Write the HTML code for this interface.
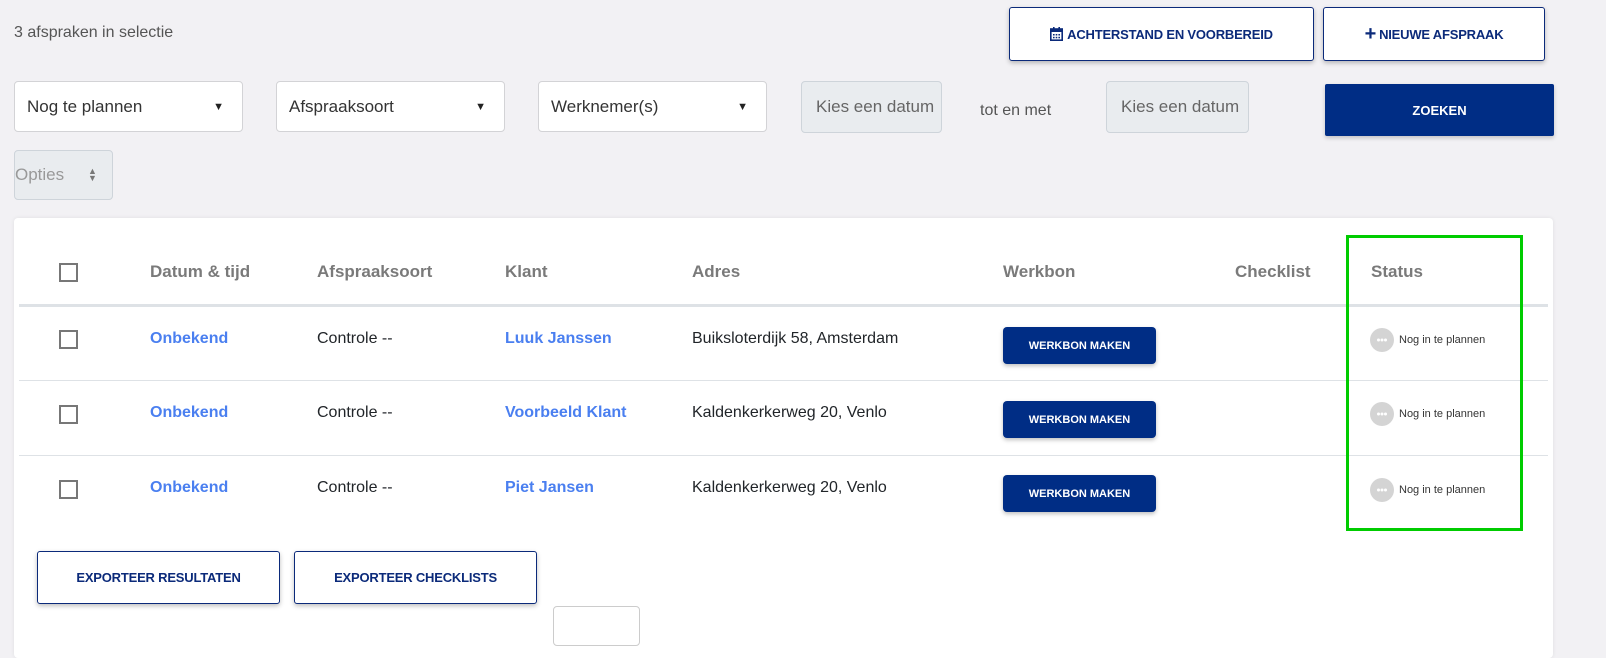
<!DOCTYPE html>
<html><head><meta charset="utf-8"><style>
*{box-sizing:border-box;margin:0;padding:0}
body{width:1606px;height:631px;overflow:hidden;background:#f2f1f4;font-family:"Liberation Sans",Arial,sans-serif;position:relative;color:#212529}
.a{position:absolute}
.obtn{position:absolute;background:#fff;border:1.5px solid #0b2a7a;border-radius:3px;box-shadow:0 2px 5px rgba(0,0,0,.25);color:#0b2a7a;font-weight:bold;font-size:13px;display:flex;align-items:center;justify-content:center;letter-spacing:-0.2px}
.sel{position:absolute;background:#fff;border:1px solid #d3d3d6;border-radius:4px;font-size:17px;color:#333;padding-left:12px;display:flex;align-items:center}
.sel .ar{position:absolute;right:18px;font-size:11px;color:#222}
.dt{position:absolute;background:#e9ecef;border:1px solid #ced4da;border-radius:4px;font-size:17px;color:#666;padding-left:14px;display:flex;align-items:center;overflow:hidden;white-space:nowrap}
.card{position:absolute;left:14px;top:218px;width:1539px;height:440px;background:#fff;border-radius:4px;box-shadow:0 0 4px rgba(0,0,0,.08)}
.th{position:absolute;top:262px;font-size:17px;font-weight:bold;color:#7a7a7a}
.cb{position:absolute;left:59px;width:19px;height:19px;border:2px solid #777;background:#fff}
.td{position:absolute;font-size:16px}
.lnk{color:#4a7ff0;font-weight:bold}
.wb{position:absolute;left:1003px;width:153px;height:37px;background:#002d85;border-radius:4px;color:#fff;font-size:11px;font-weight:bold;display:flex;align-items:center;justify-content:center;box-shadow:0 2px 4px rgba(0,0,0,.25)}
.st{position:absolute;left:1370px;font-size:11px;color:#333;display:flex;align-items:center}
.st svg{margin-right:5px}
.hl{position:absolute;left:19px;width:1529px;background:#dee2e6}
</style></head><body>
<div class="a" style="left:14px;top:24px;font-size:16px;color:#555">3 afspraken in selectie</div>
<div class="obtn" style="left:1009px;top:7px;width:305px;height:54px"><svg width="13" height="14" viewBox="0 0 13 14" style="margin-right:4px"><rect x="0.8" y="2" width="11.4" height="11.2" fill="none" stroke="#0b2a7a" stroke-width="1.6"/><rect x="0.8" y="2" width="11.4" height="3" fill="#0b2a7a"/><rect x="3" y="0" width="1.6" height="3" fill="#0b2a7a"/><rect x="8.4" y="0" width="1.6" height="3" fill="#0b2a7a"/><g fill="#0b2a7a"><rect x="3" y="7" width="1.6" height="1.5"/><rect x="5.7" y="7" width="1.6" height="1.5"/><rect x="8.4" y="7" width="1.6" height="1.5"/><rect x="3" y="9.8" width="1.6" height="1.5"/><rect x="5.7" y="9.8" width="1.6" height="1.5"/><rect x="8.4" y="9.8" width="1.6" height="1.5"/></g></svg>ACHTERSTAND EN VOORBEREID</div>
<div class="obtn" style="left:1323px;top:7px;width:222px;height:54px"><span style="font-size:20px;margin-right:3px;line-height:1">+</span>NIEUWE AFSPRAAK</div>
<div class="sel" style="left:14px;top:81px;width:229px;height:51px">Nog te plannen<span class="ar">▼</span></div>
<div class="sel" style="left:276px;top:81px;width:229px;height:51px">Afspraaksoort<span class="ar">▼</span></div>
<div class="sel" style="left:538px;top:81px;width:229px;height:51px">Werknemer(s)<span class="ar">▼</span></div>
<div class="dt" style="left:801px;top:81px;width:141px;height:52px">Kies een datum</div>
<div class="a" style="left:980px;top:102px;font-size:16px;color:#555">tot en met</div>
<div class="dt" style="left:1106px;top:81px;width:143px;height:52px">Kies een datum</div>
<div class="a" style="left:1325px;top:84px;width:229px;height:52px;background:#002d85;border-radius:2px;color:#fff;font-weight:bold;font-size:13px;display:flex;align-items:center;justify-content:center;box-shadow:0 2px 4px rgba(0,0,0,.2)">ZOEKEN</div>
<div class="a" style="left:14px;top:150px;width:99px;height:50px;background:#e9ecef;border:1px solid #ced4da;border-radius:4px;color:#999;font-size:17px;display:flex;align-items:center"><span>Opties</span><span style="position:absolute;left:73px;font-size:9px;color:#777;line-height:0.8">▲<br>▼</span></div>
<div class="card"></div>
<div class="cb" style="top:263px"></div>
<div class="th" style="left:150px">Datum &amp; tijd</div>
<div class="th" style="left:317px">Afspraaksoort</div>
<div class="th" style="left:505px">Klant</div>
<div class="th" style="left:692px">Adres</div>
<div class="th" style="left:1003px">Werkbon</div>
<div class="th" style="left:1235px">Checklist</div>
<div class="th" style="left:1371px">Status</div>
<div class="hl" style="top:304px;height:3px"></div>
<div class="hl" style="top:380px;height:1px"></div>
<div class="hl" style="top:455px;height:1px"></div>

<div class="cb" style="top:330px"></div>
<div class="td lnk" style="left:150px;top:330px">Onbekend</div>
<div class="td" style="left:317px;top:330px">Controle --</div>
<div class="td lnk" style="left:505px;top:330px">Luuk Janssen</div>
<div class="td" style="left:692px;top:330px">Buiksloterdijk 58, Amsterdam</div>
<div class="wb" style="top:327px">WERKBON MAKEN</div>
<div class="st" style="top:328px"><svg width="24" height="24" viewBox="0 0 24 24"><circle cx="12" cy="12" r="12" fill="#d4d4d4"/><circle cx="8.5" cy="12" r="1.5" fill="#fff"/><circle cx="12" cy="12" r="1.5" fill="#fff"/><circle cx="15.5" cy="12" r="1.5" fill="#fff"/></svg>Nog in te plannen</div>

<div class="cb" style="top:405px"></div>
<div class="td lnk" style="left:150px;top:404px">Onbekend</div>
<div class="td" style="left:317px;top:404px">Controle --</div>
<div class="td lnk" style="left:505px;top:404px">Voorbeeld Klant</div>
<div class="td" style="left:692px;top:404px">Kaldenkerkerweg 20, Venlo</div>
<div class="wb" style="top:401px">WERKBON MAKEN</div>
<div class="st" style="top:402px"><svg width="24" height="24" viewBox="0 0 24 24"><circle cx="12" cy="12" r="12" fill="#d4d4d4"/><circle cx="8.5" cy="12" r="1.5" fill="#fff"/><circle cx="12" cy="12" r="1.5" fill="#fff"/><circle cx="15.5" cy="12" r="1.5" fill="#fff"/></svg>Nog in te plannen</div>

<div class="cb" style="top:480px"></div>
<div class="td lnk" style="left:150px;top:479px">Onbekend</div>
<div class="td" style="left:317px;top:479px">Controle --</div>
<div class="td lnk" style="left:505px;top:479px">Piet Jansen</div>
<div class="td" style="left:692px;top:479px">Kaldenkerkerweg 20, Venlo</div>
<div class="wb" style="top:475px">WERKBON MAKEN</div>
<div class="st" style="top:478px"><svg width="24" height="24" viewBox="0 0 24 24"><circle cx="12" cy="12" r="12" fill="#d4d4d4"/><circle cx="8.5" cy="12" r="1.5" fill="#fff"/><circle cx="12" cy="12" r="1.5" fill="#fff"/><circle cx="15.5" cy="12" r="1.5" fill="#fff"/></svg>Nog in te plannen</div>

<div class="a" style="left:1346px;top:235px;width:177px;height:296px;border:3px solid #00cc00"></div>

<div class="obtn" style="left:37px;top:551px;width:243px;height:53px">EXPORTEER RESULTATEN</div>
<div class="obtn" style="left:294px;top:551px;width:243px;height:53px">EXPORTEER CHECKLISTS</div>
<div class="a" style="left:553px;top:606px;width:87px;height:40px;border:1px solid #ccc;border-radius:4px;background:#fff"></div>
</body></html>
